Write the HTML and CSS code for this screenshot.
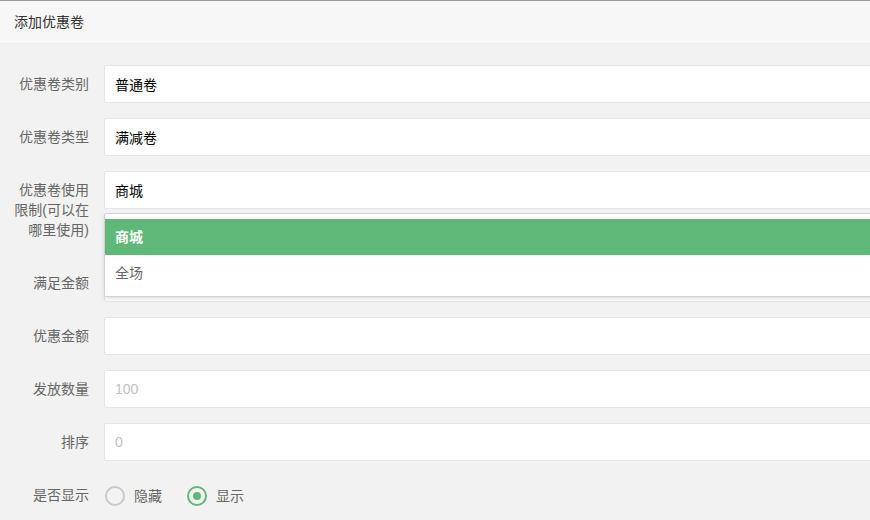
FILE: index.html
```html
<!DOCTYPE html>
<html lang="zh-CN">
<head>
<meta charset="utf-8">
<title>添加优惠卷</title>
<link rel="stylesheet" href="styles.css">
</head>
<body>
<div class="page">
  <div class="card-header">添加优惠卷</div>
  <form class="form">
    <div class="item">
      <label class="label">优惠卷类别</label>
      <div class="block"><input class="input" type="text" value="普通卷" readonly></div>
    </div>
    <div class="item">
      <label class="label">优惠卷类型</label>
      <div class="block"><input class="input" type="text" value="满减卷" readonly></div>
    </div>
    <div class="item">
      <label class="label">优惠卷使用限制(可以在哪里使用)</label>
      <div class="block select">
        <input class="input" type="text" value="商城" readonly>
        <dl class="options">
          <dd class="opt selected">商城</dd>
          <dd class="opt">全场</dd>
        </dl>
      </div>
    </div>
    <div class="item">
      <label class="label">满足金额</label>
      <div class="block"><input class="input" type="text"></div>
    </div>
    <div class="item">
      <label class="label">优惠金额</label>
      <div class="block"><input class="input" type="text"></div>
    </div>
    <div class="item">
      <label class="label">发放数量</label>
      <div class="block"><input class="input" type="text" placeholder="100"></div>
    </div>
    <div class="item">
      <label class="label">排序</label>
      <div class="block"><input class="input" type="text" placeholder="0"></div>
    </div>
    <div class="item">
      <label class="label">是否显示</label>
      <div class="block radios">
        <span class="radio"><span class="ri"></span><span class="rt">隐藏</span></span>
        <span class="radio on"><span class="ri"></span><span class="rt">显示</span></span>
      </div>
    </div>
  </form>
</div>
</body>
</html>
```
FILE: styles.css
```css
html, body {
  margin: 0;
  padding: 0;
  height: 100%;
  overflow: hidden;
}
body {
  background: #f2f2f2;
  font-family: "Liberation Sans", "Noto Sans CJK SC", sans-serif;
  font-size: 14px;
  color: #666;
  border-top: 1px solid #9a9a9a;
}
.page {
  margin-right: -40px;
}
.card-header {
  height: 42px;
  line-height: 42px;
  padding: 0 14px;
  background: #f7f7f7;
  border-bottom: 1px solid #ececec;
  color: #333;
}
.form {
  padding-top: 21px;
  display: flex;
  flex-direction: column;
  gap: 15px;
}
.item {
  display: flex;
  align-items: flex-start;
}
.label {
  flex: 0 0 auto;
  width: 80px;
  padding: 9px 15px 9px 9px;
  line-height: 20px;
  text-align: right;
  color: #666;
}
.block {
  flex: 1;
  min-width: 0;
}
.select {
  position: relative;
}
.input {
  display: block;
  width: 100%;
  box-sizing: border-box;
  height: 38px;
  padding: 0 10px;
  border: 1px solid #e6e6e6;
  border-radius: 2px;
  background: #fff;
  font: inherit;
  color: #000;
  outline: none;
}
.input::placeholder {
  color: #c2c2c2;
}
.options {
  position: absolute;
  left: 0;
  right: 0;
  top: 42px;
  margin: 0;
  padding: 5px 0;
  background: #fff;
  border: 1px solid #d2d2d2;
  border-radius: 2px;
  box-shadow: 0 2px 4px rgba(0, 0, 0, 0.12);
  z-index: 10;
}
.opt {
  margin: 0;
  padding: 0 10px;
  height: 36px;
  line-height: 36px;
  color: #666;
}
.opt.selected {
  background: #5fb878;
  color: #fff;
  font-weight: 700;
}
.radios {
  display: flex;
  align-items: center;
  padding-top: 6px;
  height: 28px;
}
.radio {
  display: flex;
  align-items: center;
  margin-right: 24px;
}
.ri {
  position: relative;
  width: 16px;
  height: 16px;
  border: 2px solid #c9c9c9;
  border-radius: 50%;
  margin: 0 9px 0 1px;
}
.rt {
  color: #666;
  line-height: 28px;
}
.radio.on .ri {
  border-color: #5fb878;
}
.radio.on .ri::after {
  content: "";
  position: absolute;
  left: 4px;
  top: 4px;
  width: 8px;
  height: 8px;
  border-radius: 50%;
  background: #5fb878;
}
```
